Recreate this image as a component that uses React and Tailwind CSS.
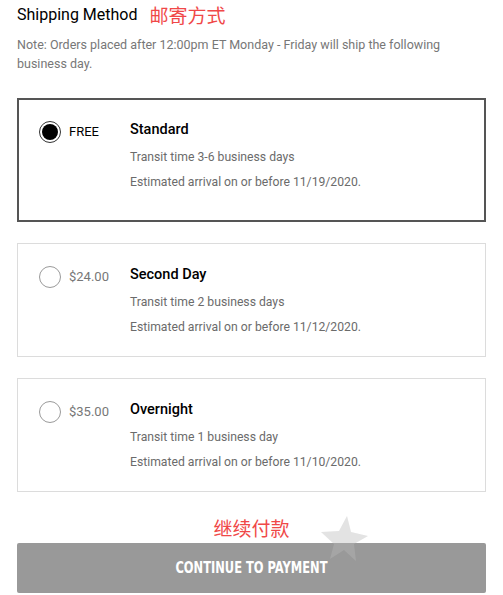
import { useState } from 'react';

const options = [
  {
    id: 'standard',
    price: 'FREE',
    name: 'Standard',
    transit: 'Transit time 3-6 business days',
    arrival: 'Estimated arrival on or before 11/19/2020.',
  },
  {
    id: 'second',
    price: '$24.00',
    name: 'Second Day',
    transit: 'Transit time 2 business days',
    arrival: 'Estimated arrival on or before 11/12/2020.',
  },
  {
    id: 'overnight',
    price: '$35.00',
    name: 'Overnight',
    transit: 'Transit time 1 business day',
    arrival: 'Estimated arrival on or before 11/10/2020.',
  },
];

function Radio({ checked }) {
  if (checked) {
    return (
      <span className="flex h-[22px] w-[22px] shrink-0 items-center justify-center rounded-full border border-[#333] bg-white">
        <span className="h-[16px] w-[16px] rounded-full bg-black"></span>
      </span>
    );
  }
  return <span className="h-[22px] w-[22px] shrink-0 rounded-full border border-[#9a9a9a] bg-white"></span>;
}

// watermark star, drawn behind and over the button
function Star({ className, fill, opacity }) {
  return (
    <svg className={className} width="50" height="48" viewBox="0 0 50 48">
      <polygon
        points="27,1 31,17 48,21 34,29 36,46 24,35 10,44 14,29 1,17 19,16"
        fill={fill}
        opacity={opacity}
      />
    </svg>
  );
}

function App() {
  const [selected, setSelected] = useState('standard');

  return (
    <div className="relative min-h-[595px] w-[503px] bg-white px-[17px] pt-[3px] font-['Roboto','Open_Sans',sans-serif] text-[#6b6b6b]">
      <div className="flex items-center">
        <h2 className="text-[16px] leading-[24px] text-black">Shipping Method</h2>
        <span className="ml-[12px] font-['Noto_Sans_CJK_SC',sans-serif] text-[19px] leading-[24px] text-[#f04848]">
          邮寄方式
        </span>
      </div>
      <p className="mt-[8px] pr-[40px] text-[12.5px] leading-[19px] text-[#777]">
        Note: Orders placed after 12:00pm ET Monday - Friday will ship the following business day.
      </p>

      <div className="mt-[25px] flex flex-col gap-[21px]">
        {options.map((opt) => {
          const active = selected === opt.id;
          return (
            <div
              key={opt.id}
              onClick={() => setSelected(opt.id)}
              className={
                active
                  ? 'flex cursor-pointer border-2 border-[#555] px-[20px] pt-[20px] pb-[25px]'
                  : 'flex cursor-pointer border border-[#dcdcdc] px-[21px] pt-[21px] pb-[16px]'
              }
            >
              <div className="mt-[1px] flex w-[91px] shrink-0 items-start">
                <Radio checked={active} />
                <span
                  className={
                    active
                      ? 'ml-[8px] text-[13px] leading-[22px] text-black'
                      : 'ml-[8px] text-[13px] leading-[22px] text-[#777]'
                  }
                >
                  {opt.price}
                </span>
              </div>
              <div>
                <div className="text-[14.5px] font-medium leading-[20px] text-black">{opt.name}</div>
                <div className="mt-[5px] text-[12.2px] leading-[25px] text-[#6b6b6b]">{opt.transit}</div>
                <div className="text-[12.2px] leading-[25px] text-[#6b6b6b]">{opt.arrival}</div>
              </div>
            </div>
          );
        })}
      </div>

      <div className="relative mt-[21px]">
        <div className="text-center font-['Noto_Sans_CJK_SC',sans-serif] text-[19px] leading-[30px] text-[#f04848]">
          继续付款
        </div>
        <Star className="pointer-events-none absolute left-[303px] top-[2px]" fill="#e0e0e0" opacity="1" />
        <button className="relative flex h-[50px] w-full items-center justify-center rounded-[2px] bg-[#999] font-['Liberation_Sans_Narrow','DejaVu_Sans_Condensed',sans-serif] text-[15px] font-bold text-white">
          <span className="inline-block scale-x-[0.85]">CONTINUE TO PAYMENT</span>
        </button>
        <Star className="pointer-events-none absolute left-[303px] top-[2px]" fill="#ffffff" opacity="0.12" />
      </div>
    </div>
  );
}

export default App;
